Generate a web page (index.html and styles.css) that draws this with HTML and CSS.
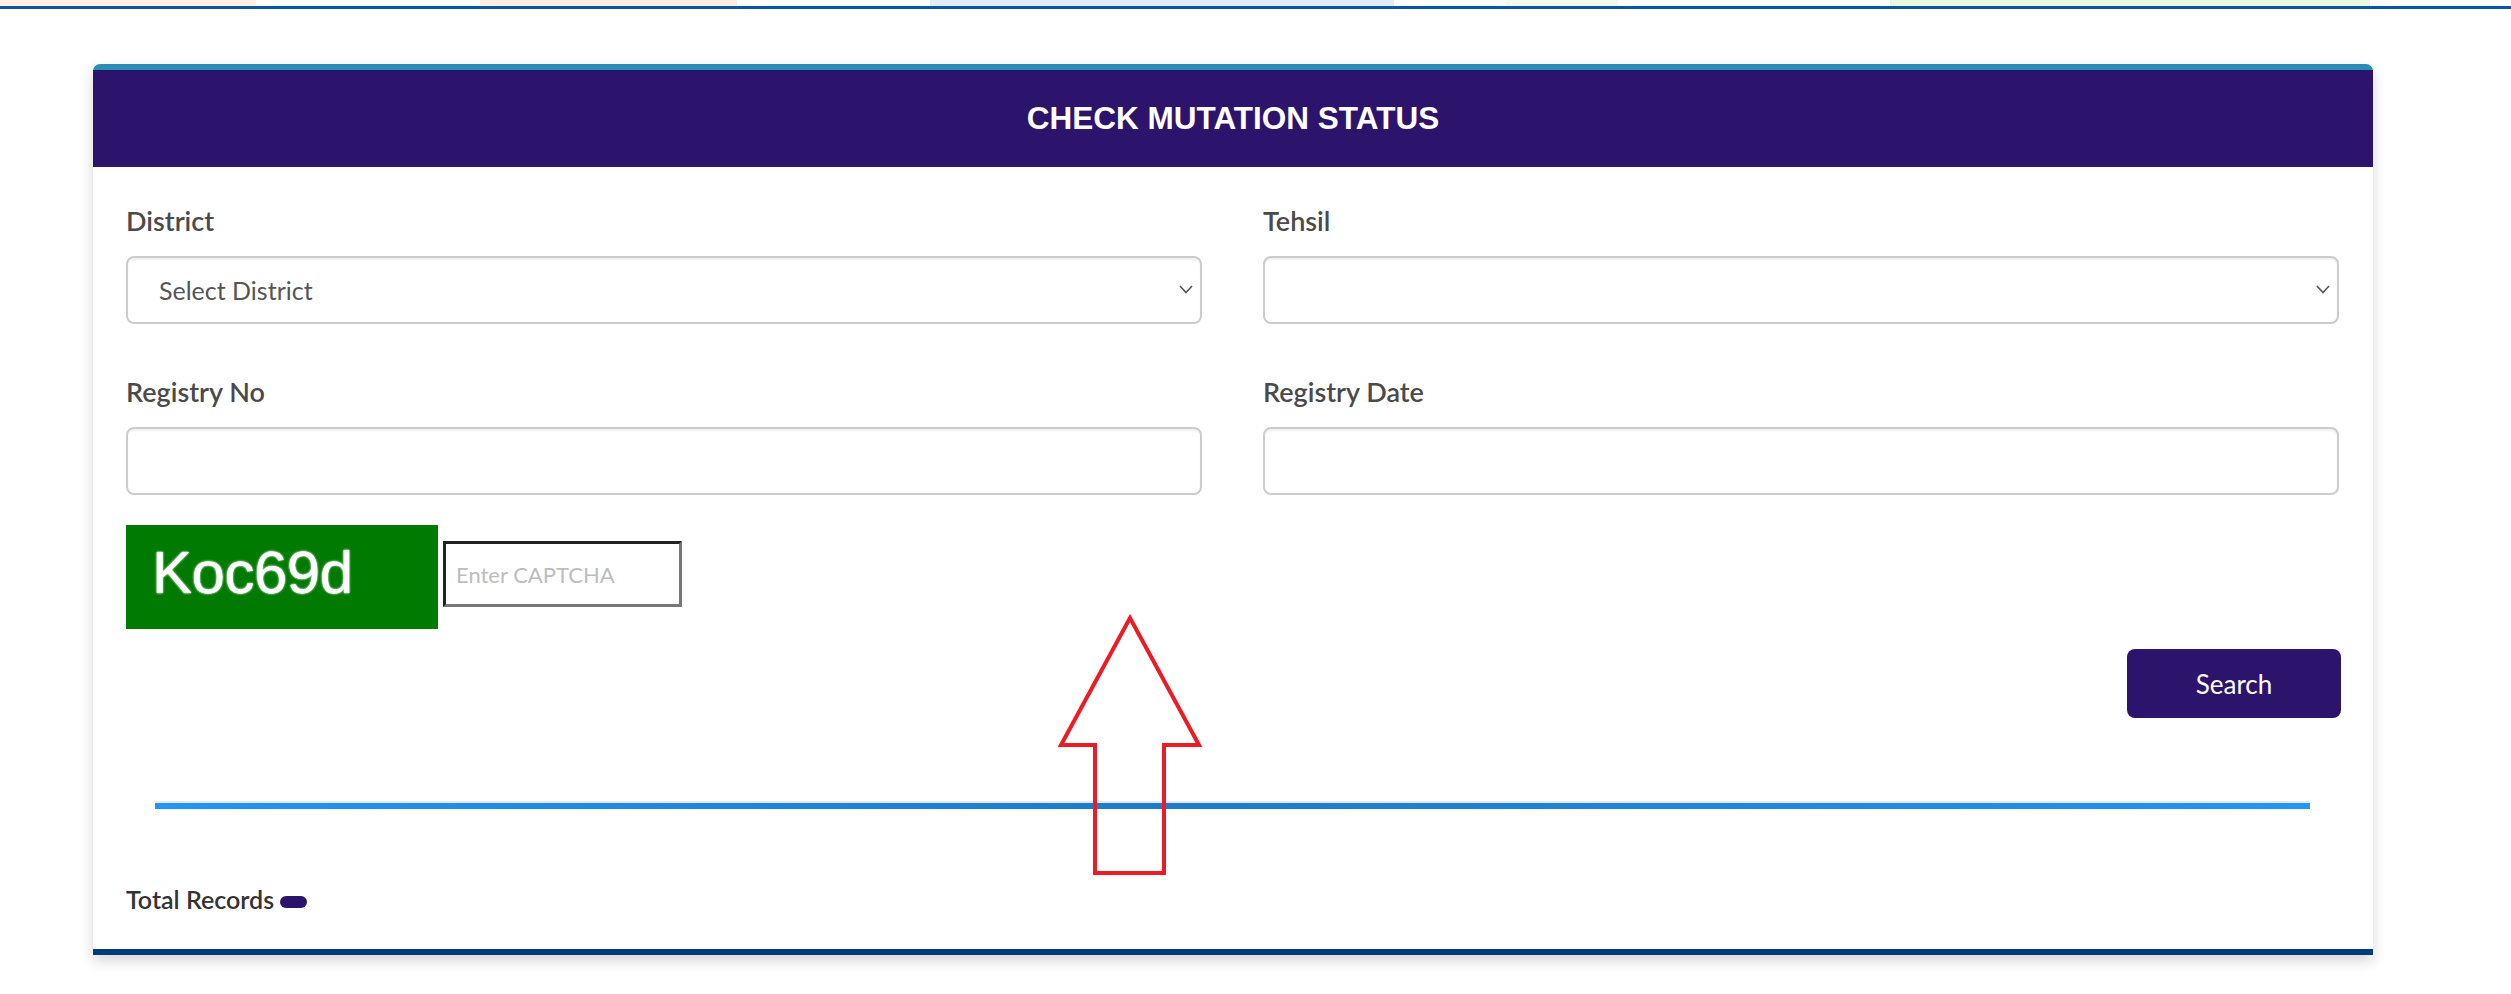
FILE: index.html
```html
<!DOCTYPE html>
<html lang="en">
<head>
<meta charset="utf-8">
<title>Check Mutation Status</title>
<link rel="stylesheet" href="styles.css">
</head>
<body>
<div class="topstrip"></div>
<div class="topline"></div>
<main class="page">
  <section class="card">
    <header class="card-head">
      <h1 class="card-title">CHECK MUTATION STATUS</h1>
    </header>
    <div class="card-body">
      <div class="form-grid">
        <div class="field">
          <label class="field-label" for="district">District</label>
          <div class="select-wrap">
            <select id="district" class="control select">
              <option>Select District</option>
            </select>
            <svg class="chev" width="14" height="9" viewBox="0 0 14 9"><path d="M1 1 L7 7.5 L13 1" fill="none" stroke="#555" stroke-width="1.6"/></svg>
          </div>
        </div>
        <div class="field">
          <label class="field-label" for="tehsil">Tehsil</label>
          <div class="select-wrap">
            <select id="tehsil" class="control select">
              <option></option>
            </select>
            <svg class="chev" width="14" height="9" viewBox="0 0 14 9"><path d="M1 1 L7 7.5 L13 1" fill="none" stroke="#555" stroke-width="1.6"/></svg>
          </div>
        </div>
        <div class="field">
          <label class="field-label" for="regno">Registry No</label>
          <input id="regno" class="control" type="text">
        </div>
        <div class="field">
          <label class="field-label" for="regdate">Registry Date</label>
          <input id="regdate" class="control" type="text">
        </div>
      </div>
      <div class="captcha-row">
        <div class="captcha-img">Koc69d</div>
        <input class="captcha-input" type="text" placeholder="Enter CAPTCHA">
      </div>
      <div class="action-row">
        <button class="btn-search" type="button">Search</button>
      </div>
      <div class="divider"></div>
      <div class="total">Total Records <span class="badge"></span></div>
    </div>
    <svg class="arrow" width="150" height="267" viewBox="0 0 150 267">
      <polygon points="75,6 6,133 40,133 40,261 109,261 109,133 144,133" fill="none" stroke="#ed1c24" stroke-width="4" stroke-linejoin="miter"/>
    </svg>
  </section>
</main>
</body>
</html>
```
FILE: styles.css
```css
html, body {
  margin: 0;
  padding: 0;
  background: #ffffff;
}
body {
  font-family: Lato, "Open Sans", "Liberation Sans", sans-serif;
  color: #444;
}
.topstrip {
  height: 6px;
  background: linear-gradient(to right,
    #fef1e4 0, #fef1e4 256px, #ffffff 256px, #ffffff 480px,
    #fdeedf 480px, #fdeedf 737px, #ffffff 737px, #ffffff 930px,
    #e3edf8 930px, #e3edf8 1394px, #ffffff 1394px, #ffffff 1506px,
    #f2faec 1506px, #f2faec 1618px, #ffffff 1618px, #ffffff 1890px,
    #e8f9df 1890px, #e8f9df 2370px, #ffffff 2370px);
}
.topline {
  height: 3px;
  background: #0b56a4;
}
.page {
  padding: 55px 138px 40px 93px;
}
.card {
  position: relative;
  background: #fff;
  border-top: 6px solid #2b8cb8;
  border-bottom: 6px solid #003d7a;
  border-radius: 7px 7px 0 0;
  box-shadow: 0 6px 14px rgba(0, 0, 0, 0.16);
}
.card-head {
  height: 97px;
  background: #2c146c;
  display: flex;
  align-items: center;
  justify-content: center;
}
.card-title {
  margin: 0;
  font-family: "Liberation Sans", Arial, sans-serif;
  font-weight: 700;
  font-size: 31.5px;
  color: #fff;
}
.card-body {
  padding: 37px 34px 34px 33px;
}
.form-grid {
  display: grid;
  grid-template-columns: 1fr 1fr;
  column-gap: 61px;
  row-gap: 51px;
}
.field {
  display: flex;
  flex-direction: column;
}
.field-label {
  font-size: 27px;
  line-height: 34px;
  font-weight: 600;
  color: #4a4a4a;
  margin-bottom: 18px;
}
.select-wrap {
  position: relative;
}
.control {
  box-sizing: border-box;
  width: 100%;
  height: 68px;
  border: 2px solid #cccccc;
  border-radius: 8px;
  background: #fff;
  box-shadow: inset 0 2px 2px rgba(0, 0, 0, 0.06);
  font-family: Lato, "Open Sans", sans-serif;
  font-size: 25px;
  color: #555;
  padding: 0 31px;
  outline: none;
}
.select {
  -webkit-appearance: none;
  appearance: none;
}
.chev {
  position: absolute;
  right: 9px;
  top: 29px;
  pointer-events: none;
}
.captcha-row {
  display: flex;
  align-items: flex-start;
  gap: 5px;
  margin-top: 30px;
}
.captcha-img {
  box-sizing: border-box;
  width: 312px;
  height: 104px;
  background: #007a00;
  color: #fff;
  font-family: "Liberation Sans", Arial, sans-serif;
  font-size: 60px;
  line-height: 96px;
  padding-left: 26px;
  text-shadow: 0 0 1px #fff, 0 0 2px rgba(235, 255, 235, 0.9), 0 0 3px rgba(220, 255, 220, 0.6);
  letter-spacing: -0.5px;
}
.captcha-input {
  box-sizing: border-box;
  width: 239px;
  height: 66px;
  margin-top: 16px;
  border: 3px solid;
  border-color: #222 #777 #777 #222;
  padding: 0 10px;
  font-family: Lato, "Open Sans", sans-serif;
  font-size: 22px;
  outline: none;
}
.captcha-input::placeholder {
  color: #bdbdbd;
}
.action-row {
  display: flex;
  justify-content: flex-end;
  margin-top: 20px;
  margin-right: -2px;
}
.btn-search {
  width: 214px;
  height: 69px;
  border: none;
  border-radius: 8px;
  background: #2c146c;
  color: #fff;
  font-family: Lato, "Open Sans", sans-serif;
  font-size: 26px;
}
.divider {
  margin: 83px 29px 0 29px;
  height: 6px;
  border-top: 2px solid #e8e8e8;
  background: linear-gradient(to right, #2196f3 0%, #1c7ccb 45%, #1e80cf 60%, #2196f3 100%);
}
.total {
  margin-top: 74px;
  font-size: 25px;
  line-height: 32px;
  font-weight: 600;
  color: #333;
  display: flex;
  align-items: center;
  gap: 6px;
}
.badge {
  display: inline-block;
  width: 27px;
  height: 12px;
  border-radius: 6px;
  background: #2c146c;
  margin-top: 6px;
}
.arrow {
  position: absolute;
  left: 962px;
  top: 542px;
}
```
